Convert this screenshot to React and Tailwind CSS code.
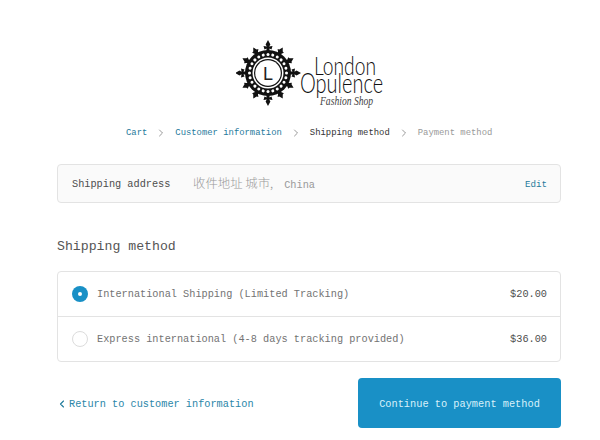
import { ChevronRight, ChevronLeft } from "lucide-react";

const mono = "font-['Liberation_Mono','Noto_Sans_CJK_SC',monospace]";

function Logo() {
  const angles = [0, 30, 60, 90, 120, 150, 180, 210, 240, 270, 300, 330];
  const dots = Array.from({ length: 24 }, (_, i) => i * 15);
  return (
    <svg width="152" height="70" viewBox="0 0 152 70" className="block">
      <g transform="translate(32 34)">
        {angles.map((a) => (
          <g key={a} transform={`rotate(${a})`} fill="#111">
            {a % 90 === 0 ? (
              <path d="M0 -33 L2.4 -28.5 L1.2 -26.5 L4.5 -27 L3.5 -23.5 L1.5 -24.5 L1.5 -21 L-1.5 -21 L-1.5 -24.5 L-3.5 -23.5 L-4.5 -27 L-1.2 -26.5 L-2.4 -28.5 Z" />
            ) : (
              <path d="M0 -29.5 L2 -26 L3.6 -25.5 L2 -23.5 L1.4 -21 L-1.4 -21 L-2 -23.5 L-3.6 -25.5 L-2 -26 Z" />
            )}
          </g>
        ))}
        <circle r="23" fill="#111" />
        {dots.map((a) => (
          <circle key={a} cx="0" cy="-18.5" r="1.5" fill="#fff" transform={`rotate(${a})`} />
        ))}
        <circle r="15.5" fill="#fff" />
        <circle r="14" fill="#111" />
        <circle r="12.8" fill="#fff" />
        <text x="0" y="7" textAnchor="middle" fontFamily="Liberation Sans, sans-serif" fontSize="18" fill="#222">
          L
        </text>
      </g>
      <text transform="translate(78 36) scale(.77 1)" fontFamily="Lato, sans-serif" fontWeight="300" fontSize="25" fill="#111">
        London
      </text>
      <text transform="translate(64 54) scale(.74 1)" fontFamily="Lato, sans-serif" fontWeight="300" fontSize="27" fill="#111">
        Opulence
      </text>
      <text transform="translate(84 66) scale(.74 1)" fontFamily="Liberation Serif, serif" fontStyle="italic" fontSize="13" fill="#444">
        Fashion Shop
      </text>
    </svg>
  );
}

function Option({ label, price, checked, last }) {
  return (
    <div className={`flex items-center pl-[14px] pr-[13px] ${last ? "h-[44px]" : "h-[45px] border-b border-[#e3e3e3]"}`}>
      {checked ? (
        <span className="w-4 h-4 rounded-full bg-[#1990c6] flex items-center justify-center shrink-0">
          <span className="w-1 h-1 rounded-full bg-white" />
        </span>
      ) : (
        <span className="w-4 h-4 rounded-full border border-[#dcdcdc] shrink-0" />
      )}
      <span className="ml-[9px] pt-[2px] flex-1 text-[10.25px] text-[#737373]">{label}</span>
      <span className="pt-[2px] text-[10.25px] text-[#4d4d4d]">{price}</span>
    </div>
  );
}

export default function App() {
  return (
    <div className={`w-[600px] h-[440px] bg-white overflow-hidden ${mono}`}>
      <div className="flex justify-start pt-[39px] pl-[236px]">
        <Logo />
      </div>

      <div className="mt-[18px] h-[12px] pl-[126px] flex items-center text-[8.9px] leading-none">
        <span className="text-[#1f7a9c]">Cart</span>
        <ChevronRight size={12} strokeWidth={1.5} className="text-[#777] mx-[8px]" />
        <span className="text-[#1f7a9c]">Customer information</span>
        <ChevronRight size={12} strokeWidth={1.5} className="text-[#777] mx-[8px]" />
        <span className="text-[#333]">Shipping method</span>
        <ChevronRight size={12} strokeWidth={1.5} className="text-[#777] mx-[8px]" />
        <span className="text-[#999]">Payment method</span>
      </div>

      <div className="ml-[57px] w-[504px] mt-[25px]">
        <div className="h-[39px] flex items-center pl-[14px] pr-[13px] bg-[#fafafa] border border-[#e3e3e3] rounded">
          <span className="pt-[2px] text-[10.25px] text-[#4d4d4d] w-[121px]">Shipping address</span>
          <span className="flex-1 text-[12.4px] text-[#999] font-['Noto_Sans_CJK_SC',sans-serif] font-light">
            收件地址 城市,<span className={`ml-[11px] text-[10.25px] ${mono}`}>China</span>
          </span>
          <span className="pt-[2px] text-[9.2px] text-[#1f7a9c]">Edit</span>
        </div>

        <h2 className="mt-[34px] text-[13.2px] leading-[20px] font-normal text-[#555]">Shipping method</h2>

        <div className="mt-[14px] border border-[#e3e3e3] rounded">
          <Option label="International Shipping (Limited Tracking)" price="$20.00" checked />
          <Option label="Express international (4-8 days tracking provided)" price="$36.00" last />
        </div>

        <div className="mt-[16px] flex items-center justify-between">
          <a className="mt-[3px] flex items-center text-[10.25px] text-[#2a86a8]">
            <ChevronLeft size={12} strokeWidth={2.25} className="text-[#1f7a9c] -mt-[2px] -ml-[1px] mr-[1px]" />
            Return to customer information
          </a>
          <button className="w-[203px] h-[50px] pt-[3px] rounded bg-[#1990c6] text-[10.3px] text-[#d8f0fa]">
            Continue to payment method
          </button>
        </div>
      </div>
    </div>
  );
}
